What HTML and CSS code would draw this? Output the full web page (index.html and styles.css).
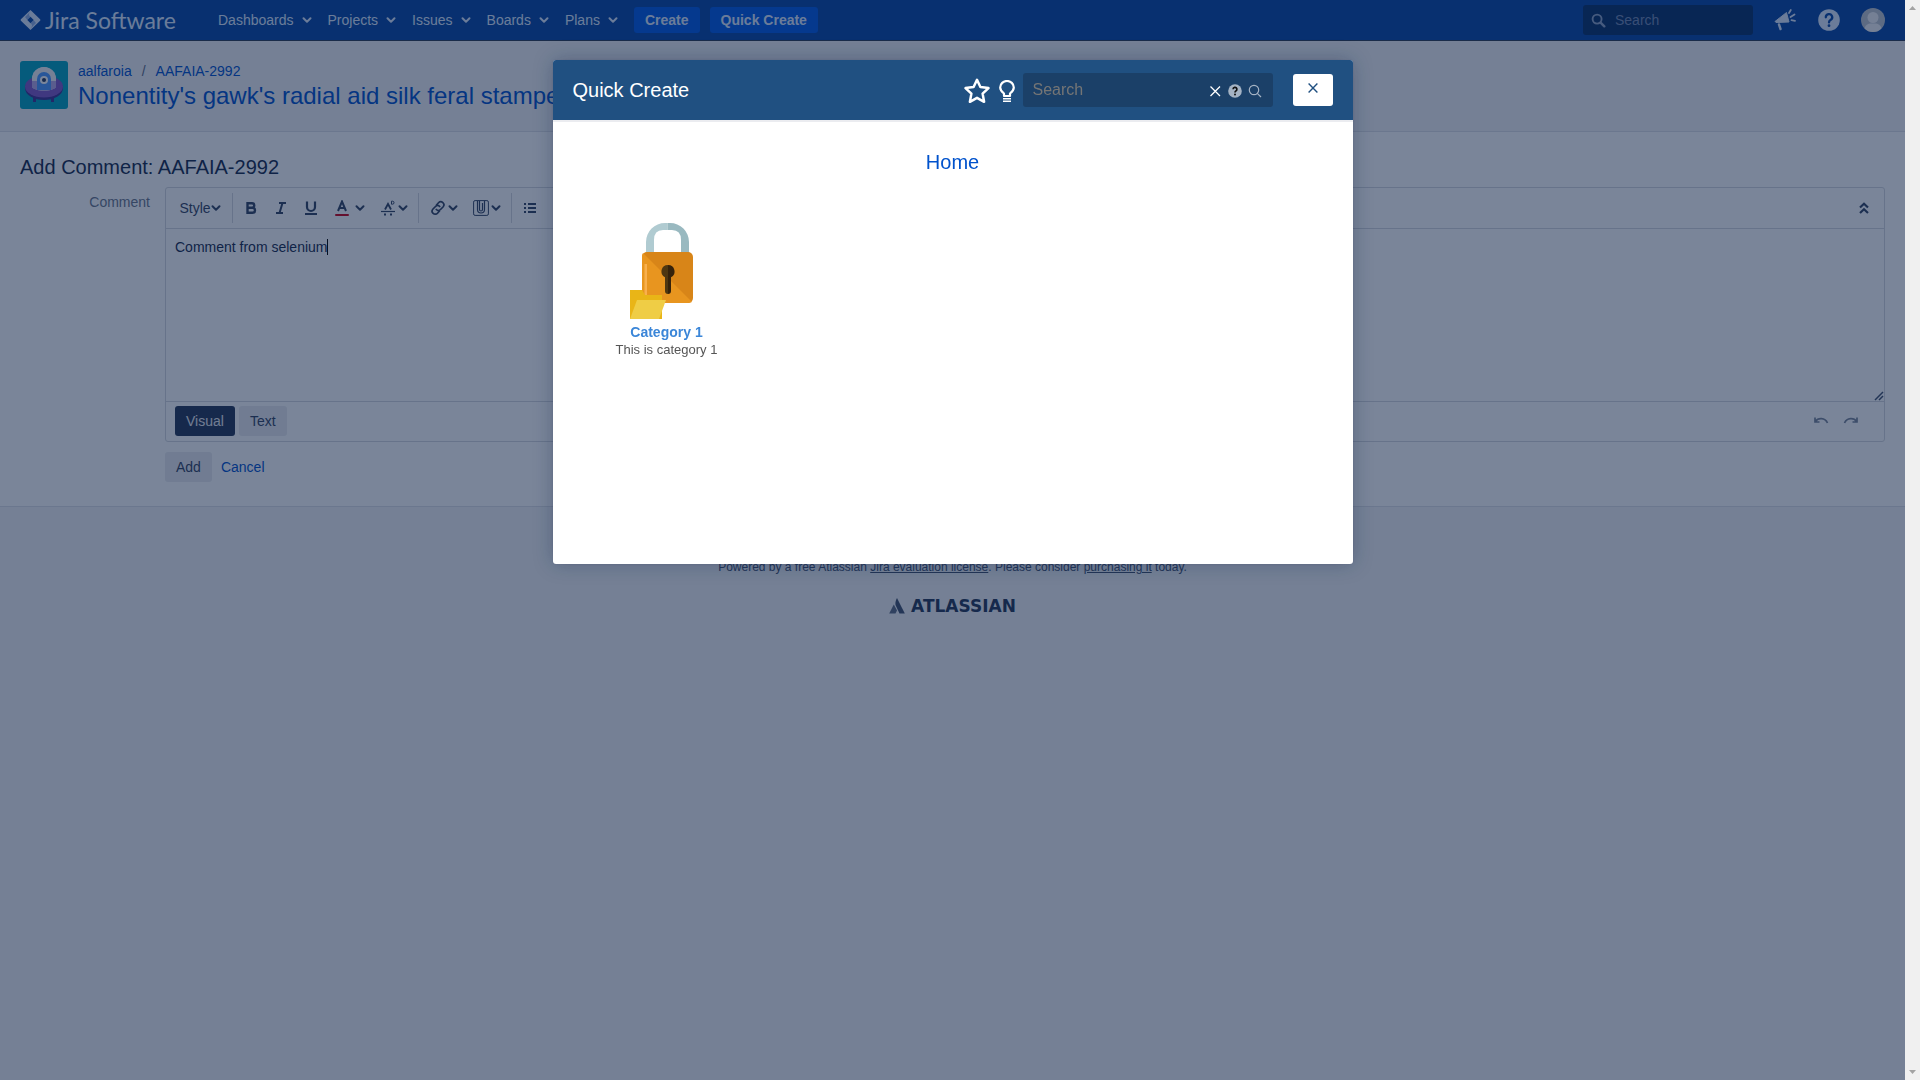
FILE: index.html
```html
<!DOCTYPE html>
<html lang="en">
<head>
<meta charset="utf-8">
<title>Add Comment: AAFAIA-2992 - Jira Software</title>
<link rel="stylesheet" href="styles.css">
</head>
<body>
<svg class="defs" aria-hidden="true">
  <symbol id="chevron" viewBox="0 0 10 10"><path d="M1.5 3.2 5 6.7 8.500 3.200" fill="none" stroke="currentColor" stroke-width="2" stroke-linecap="round" stroke-linejoin="round"/></symbol>
</svg>
<div class="viewport">
<div class="page">
  <header class="topbar">
    <a class="logo" href="#" aria-label="Jira Software">
      <svg class="logo-mark" viewBox="0 0 20 20"><path fill="#deebff" fill-rule="evenodd" d="M10 0 19.600 9.300a1 1 0 0 1 0 1.400L10 20 .4 10.700a1 1 0 0 1 0-1.400ZM10 6.800 6.800 10 10 13.200 13.200 10Z"/><path fill="#5e8ad6" opacity=".6" d="M10 1.500C8 3.500 8 5.500 10 7L6.900 10 4.500 7ZM10 18.500c2-2 2-4 0-5.500l3.100-3 2.400 3Z"/></svg>
      <span class="logo-text">Jira Software</span>
    </a>
    <nav class="nav">
      <a href="#">Dashboards<svg><use href="#chevron"/></svg></a>
      <a href="#">Projects<svg><use href="#chevron"/></svg></a>
      <a href="#">Issues<svg><use href="#chevron"/></svg></a>
      <a href="#">Boards<svg><use href="#chevron"/></svg></a>
      <a href="#">Plans<svg><use href="#chevron"/></svg></a>
    </nav>
    <div class="create">
      <button type="button">Create</button>
      <button type="button">Quick Create</button>
    </div>
    <label class="site-search">
      <svg viewBox="0 0 16 16"><circle cx="6.500" cy="6.500" r="4.800" fill="none" stroke="currentColor" stroke-width="2"/><path d="m10.200 10.200 4 4" stroke="currentColor" stroke-width="2.600" stroke-linecap="round"/></svg>
      <input type="text" placeholder="Search" aria-label="Search site">
    </label>
    <div class="tools">
      <a href="#" aria-label="Feedback"><svg viewBox="0 0 24 24" fill="none" stroke="currentColor"><path d="M2 13.500 13.500 4.500l2.500 9.500-13 .5Z" fill="currentColor" stroke-linejoin="round"/><path d="m6 16.500 1.500 4.500" stroke-width="2.400" stroke-linecap="round"/><path d="m16 5 1.800-3M17.500 9l4-2.500M18.500 12.200l3.500.6" stroke-width="1.800" stroke-linecap="round"/></svg></a>
      <a href="#" aria-label="Help"><svg viewBox="0 0 24 24"><circle cx="12" cy="12" r="10.800" fill="currentColor"/><path d="M8.800 9.300a3.200 3.200 0 1 1 4.700 2.800c-1 .6-1.500 1-1.500 2.300" fill="none" stroke="#0747a6" stroke-width="2.300" stroke-linecap="round"/><circle cx="12" cy="17.700" r="1.400" fill="#0747a6"/></svg></a>
      <a href="#" aria-label="User profile"><svg viewBox="0 0 24 24"><defs><clipPath id="av"><circle cx="12" cy="12" r="12"/></clipPath></defs><g clip-path="url(#av)"><path fill="#c1c7d0" d="M0 0h24v24H0z"/><circle cx="12" cy="9.500" r="5.500" fill="#f4f5f7"/><path d="M3 24c0-6 3-8 6-8.500h6c3 .5 6 2.500 6 8.500Z" fill="#f4f5f7"/></g></svg></a>
    </div>
  </header>

  <section class="issue-head">
    <svg class="project" viewBox="0 0 48 48"><rect width="48" height="48" rx="3" fill="#00a3bf"/><path d="M13 34h3v7h-3zM31 34h3v7h-3z" fill="#403294"/><ellipse cx="24" cy="27" rx="19" ry="12" fill="#403294"/><ellipse cx="24" cy="25.500" rx="19" ry="11" fill="#8058c8"/><path d="M12 18a12 12 0 0 1 24 0v8c-4 5-20 5-24 0Z" fill="#deebff"/><path d="M12 18v8c4 5 20 5 24 0v-8Z" fill="#b9a8e8"/><path d="M12 18a12 12 0 0 1 24 0v2H12Z" fill="#f4f5f7"/><path d="M17 18a7 7 0 0 1 14 0v11H17Z" fill="#4c9aff"/><circle cx="24" cy="19" r="4" fill="#fff"/><circle cx="24" cy="19" r="2" fill="#253858"/></svg>
    <div class="issue-title">
      <nav class="crumbs"><a href="#">aalfaroia</a><span>/</span><a href="#">AAFAIA-2992</a></nav>
      <h1><a href="#">Nonentity's gawk's radial aid silk feral stamped</a></h1>
    </div>
  </section>

  <main class="content">
    <h2>Add Comment: AAFAIA-2992</h2>
    <form class="form">
      <label class="field-label" for="comment">Comment</label>
      <div class="field">
        <div class="editor">
          <div class="toolbar">
            <div class="group"><button type="button" class="style">Style<svg class="chev"><use href="#chevron"/></svg></button></div>
            <div class="group">
              <button type="button" aria-label="Bold"><svg viewBox="0 0 16 16" fill="none" stroke="currentColor" stroke-width="2.400"><path d="M4.500 3.200H9a2.200 2.200 0 0 1 0 4.500H4.500ZM4.500 7.700h5a2.500 2.500 0 0 1 0 5H4.500Z"/></svg></button>
              <button type="button" aria-label="Italic"><svg viewBox="0 0 16 16" fill="none" stroke="currentColor" stroke-width="2"><path d="M6 3h7M3 13h7M9.500 3l-3 10"/></svg></button>
              <button type="button" aria-label="Underline"><svg viewBox="0 0 16 16" fill="none" stroke="currentColor" stroke-width="2.200"><path d="M4 1.500V7a4 4 0 0 0 8 0V1.500M2 14h12"/></svg></button>
              <button type="button" class="pair wide" aria-label="Text colour"><svg viewBox="0 0 16 16"><path d="m4 11 4-9.500L12 11M5.500 8h5" fill="none" stroke="currentColor" stroke-width="2"/><rect x="1" y="14" width="14" height="2" rx="1" fill="#d00016"/></svg><svg class="chev"><use href="#chevron"/></svg></button>
              <button type="button" class="pair" aria-label="More formatting"><svg viewBox="0 0 16 16" fill="none" stroke="currentColor"><path d="M1 11.500h14" stroke-width="1.200"/><path d="m5 9.500 3-5.500 3 5.500M4 14.500h2M10 14.500h2" stroke-width="1.800"/><path d="M11.500 1.200h1a1.300 1.300 0 0 1 0 3h-1Z"/></svg><svg class="chev"><use href="#chevron"/></svg></button>
            </div>
            <div class="group">
              <button type="button" class="pair" aria-label="Link"><svg viewBox="0 0 16 16" fill="none" stroke="currentColor" stroke-width="1.700" stroke-linecap="round"><path d="m6.500 5 2-2.200a3 3 0 0 1 4.500 4.200l-2.500 2.500a3 3 0 0 1-4.200 0M9.500 11l-2 2.200A3 3 0 0 1 3 9l2.500-2.500a3 3 0 0 1 4.200 0"/></svg><svg class="chev"><use href="#chevron"/></svg></button>
              <button type="button" class="pair" aria-label="Attachment"><svg viewBox="0 0 16 16" fill="none" stroke="currentColor"><rect x=".6" y=".6" width="14.800" height="14.800" rx="1.500"/><path d="M4.500 1v8.500a3.500 3.500 0 0 0 7 0V3.500M9.500 3v6.500a1.500 1.500 0 0 1-3 0V1M11.500 3.500V1" stroke-width="1.200"/></svg><svg class="chev"><use href="#chevron"/></svg></button>
            </div>
            <div class="group last"><button type="button" aria-label="Bullet list"><svg viewBox="0 0 16 16" fill="currentColor"><path d="M2 3h2v2H2zM2 7h2v2H2zM2 11h2v2H2zM6 3h8v2H6zM6 7h8v2H6zM6 11h8v2H6z"/></svg></button></div>
            <button type="button" class="collapse" aria-label="Collapse toolbar"><svg viewBox="0 0 16 16" fill="none" stroke="currentColor" stroke-width="2.200"><path d="m4 7.500 4-3.700 4 3.700M4 13l4-3.700 4 3.700"/></svg></button>
          </div>
          <div class="textarea-wrap">
            <textarea id="comment">Comment from selenium</textarea>
            <span class="caret"></span>
            <svg class="grip" viewBox="0 0 10 10"><path d="M1 9 9 1M5 9l4-4" stroke="currentColor" stroke-width="1.500"/></svg>
          </div>
          <div class="editor-foot">
            <button type="button" class="btn active">Visual</button>
            <button type="button" class="btn">Text</button>
            <div class="history">
              <button type="button" aria-label="Undo"><svg viewBox="0 0 16 16" fill="none" stroke="currentColor" stroke-width="1.700"><path d="M2 4.500V9h4.500M2.500 8.500C5 4.500 12 4.500 14.500 10"/></svg></button>
              <button type="button" aria-label="Redo"><svg viewBox="0 0 16 16" fill="none" stroke="currentColor" stroke-width="1.700"><path d="M14 4.500V9H9.500M13.500 8.500C11 4.500 4 4.500 1.500 10"/></svg></button>
            </div>
          </div>
        </div>
        <div class="actions"><button type="submit" class="btn">Add</button><a href="#">Cancel</a></div>
      </div>
    </form>
  </main>

  <footer class="footer">
    <p>Powered by a free Atlassian <a href="#">Jira evaluation license</a>. Please consider <a href="#">purchasing it</a> today.</p>
    <a class="atlassian" href="#"><svg viewBox="0 0 16 16"><path fill="#42526e" d="M8 0 15.800 15.500H10.500L6.500 7C6 4 7 2 8 0Z"/><path fill="#5e6c84" d="M4.800 6.500 8 12.500l-1.500 3H.2Z"/></svg><span>ATLASSIAN</span></a>
  </footer>
</div>
<div class="scrollbar" aria-hidden="true"><svg viewBox="0 0 15 15"><path d="M4 10 7.500 6 11 10Z"/></svg><svg viewBox="0 0 15 15"><path d="M4 5 7.500 9 11 5Z"/></svg></div>
</div>

<div class="blanket">
  <section class="dialog" role="dialog" aria-label="Quick Create">
    <header class="dialog-head">
      <h2>Quick Create</h2>
      <button type="button" class="icon star" aria-label="Favourites"><svg viewBox="0 0 28 28"><path d="m14 2.800 3.400 7.200 8.100 1.100-5.900 5.500 1.500 8.200-7.100-4-7.100 4 1.500-8.200-5.900-5.500L10.600 10Z" fill="none" stroke="currentColor" stroke-width="2.500" stroke-linejoin="round"/></svg></button>
      <button type="button" class="icon bulb" aria-label="Tips"><svg viewBox="0 0 16 22"><path d="M5 16v-2.500C2.500 11.500 1.200 10 1.200 7.500a6.800 6.500 0 0 1 13.600 0c0 2.500-1.300 4-3.800 6V16Z" fill="none" stroke="currentColor" stroke-width="2.200" stroke-linejoin="round"/><path d="M4 18h8v1.500H4zM4 20.500h8V22H4z" fill="currentColor"/></svg></button>
      <div class="dialog-search">
        <input type="text" placeholder="Search" aria-label="Search categories">
        <svg viewBox="0 0 14 14"><path d="m2.500 2.500 9.500 9.500m0-9.500-9.500 9.500" stroke="#fff" stroke-width="1.300"/></svg>
        <svg viewBox="0 0 14 14"><circle cx="7" cy="7" r="6.800" fill="#a5b3c4"/><path d="M5.100 5.300a1.900 1.900 0 1 1 2.800 1.600c-.7.400-.9.700-.9 1.500" fill="none" stroke="#111" stroke-width="1.700"/><circle cx="7" cy="10.600" r="1" fill="#111"/></svg>
        <svg viewBox="0 0 14 14" fill="none" stroke="#a5b3c4" stroke-width="1.200"><circle cx="6" cy="6" r="4.700"/><path d="m9.300 9.300 3.700 3.700"/></svg>
      </div>
      <button type="button" class="close" aria-label="Close"><svg viewBox="0 0 10 10"><path d="m.6.600 8.800 8.800m0-8.800L.6 9.400" stroke="currentColor" stroke-width="1.400"/></svg></button>
    </header>
    <div class="dialog-body">
      <h3><a href="#">Home</a></h3>
      <div class="categories">
        <a class="category" href="#">
          <svg viewBox="0 0 74 98"><path d="M16 32V20A19 19 0 0 1 35 1h2.500v7H33q-9 0-9 10v14Z" fill="#b0cbd1"/><path d="M37.500 1H40a19 19 0 0 1 19 19v12h-8V18q0-10-9-10h-4.500Z" fill="#99b9c0"/><rect x="12" y="30" width="51" height="51" rx="5" fill="#d88518"/><path d="M13 31 62 80q-2 1-4 1H17q-5 0-5-5V35q0-3 1-4Z" fill="#e8951f"/><path d="M14.500 42h2.500v36h-2.500z" fill="#f9b04d"/><path d="M38 43a6.500 6.500 0 0 0-3 12.300V69q0 3 3 3Z" fill="#4f3711"/><path d="M38 43a6.500 6.500 0 0 1 3 12.300V69q0 3-3 3Z" fill="#35220b"/><path d="M0 68h12l3 5h17v24H0Z" fill="#e9b517"/><path d="M7 78h29l-7 19H0Z" fill="#efcd45"/></svg>
          <strong>Category 1</strong>
          <span>This is category 1</span>
        </a>
      </div>
    </div>
  </section>
</div>
</body>
</html>
```
FILE: styles.css
```css
* { box-sizing: border-box; }
html, body { height: 100%; }
body { margin: 0; font: 14px/20px "Liberation Sans", Arial, sans-serif; color: #172b4d; background: #f4f5f7; overflow: hidden; }
a { color: #0052cc; text-decoration: none; }
h1, h2, h3, p { margin: 0; font-weight: 400; }
button, input, textarea { font: inherit; }
button { border: 0; padding: 0; background: none; color: inherit; }
svg { display: block; flex: none; }
.defs { display: none; }

.viewport { display: flex; min-height: 100%; }
.page { flex: 1; min-width: 0; }
.scrollbar { position: relative; z-index: 3; width: 15px; flex: none; background: #f0f0f0; display: flex; flex-direction: column; justify-content: space-between; fill: #a3a3a3; }
.scrollbar svg { width: 15px; height: 15px; }

.topbar { display: flex; align-items: center; height: 41px; padding: 0 20px; background: #0747a6; border-bottom: 1px solid #2e3d54; color: #deebff; }
.logo { display: flex; align-items: center; gap: 4px; width: 188px; color: #deebff; }
.logo-mark { width: 21px; height: 20px; }
.logo-text { font: 23px/24px Lato, sans-serif; white-space: nowrap; }
.nav { display: flex; }
.nav a { display: flex; align-items: center; gap: 8px; padding: 0 6px 0 10px; color: #deebff; }
.nav svg { width: 10px; height: 10px; }
.create { display: flex; gap: 10px; padding-left: 10px; }
.create button { height: 26px; padding: 0 11px; border-radius: 3px; background: #0059e6; font-weight: 700; }
.site-search { display: flex; align-items: center; gap: 9px; width: 170px; height: 30px; margin-left: auto; padding: 0 8px; border-radius: 3px; background: #083069; color: #8fa3c6; }
.site-search svg { width: 15px; height: 15px; }
.site-search input { flex: 1; min-width: 0; border: 0; padding: 0; background: none; }
.site-search input::placeholder { color: #7188b3; opacity: 1; }
.tools { display: flex; gap: 20px; padding-left: 20px; }
.tools svg { width: 24px; height: 24px; }
.tools a { color: #deebff; }

.issue-head { display: flex; gap: 10px; padding: 20px; border-bottom: 1px solid #dfe1e6; }
.project { width: 48px; height: 48px; }
.crumbs { display: flex; gap: 10px; color: #5e6c84; }
.issue-title h1 { font-size: 24px; line-height: 30px; white-space: nowrap; }

.content { padding: 23px 20px 24px; background: #fff; border-bottom: 1px solid #dfe1e6; }
.content h2 { font-size: 20px; line-height: 24px; }
.form { display: flex; padding-top: 8px; gap: 15px; }
.field-label { width: 130px; padding-top: 5px; text-align: right; color: #6b778c; }
.field { flex: 1; }
.editor { border: 1px solid #d5d8de; border-radius: 3px; }
.toolbar { display: flex; align-items: center; height: 41px; border-bottom: 1px solid #d5d8de; color: #344563; }
.group { display: flex; align-items: center; height: 30px; padding: 0 3px; border-right: 1px solid #d5d8de; }
.group.last { border: 0; }
.toolbar button { display: flex; align-items: center; justify-content: center; width: 30px; height: 30px; }
.toolbar svg { width: 16px; height: 16px; }
.toolbar .chev { width: 10px; height: 10px; }
.toolbar .style { width: 60px; padding-left: 2px; }
.toolbar .pair { width: 43px; gap: 2px; }
.toolbar .wide { width: 46px; gap: 5px; }
.toolbar .collapse { margin-left: auto; margin-right: 5px; }
.textarea-wrap { position: relative; height: 173px; border-bottom: 1px solid #d5d8de; }
textarea { display: block; width: 100%; height: 100%; padding: 8px 9px; border: 0; background: none; color: #172b4d; outline: 0; resize: none; }
.caret { position: absolute; left: 161px; top: 10px; width: 1px; height: 16px; background: #000; }
.grip { position: absolute; right: 0; bottom: 0; width: 10px; height: 10px; color: #42526e; }
.editor-foot { display: flex; align-items: center; gap: 4px; padding: 4px 9px 5px; }
.btn { height: 30px; padding: 0 11px; border-radius: 3px; background: #ebecf0; color: #344563; }
.btn.active { background: #253858; color: #ebecf0; }
.history { display: flex; gap: 14px; margin-left: auto; padding-right: 16px; color: #7a869a; }
.history svg { width: 16px; height: 16px; }
.actions { display: flex; align-items: center; gap: 9px; padding-top: 10px; }

.footer { padding: 50px 20px; text-align: center; font-size: 12px; color: #42526e; }
.footer p a { color: inherit; text-decoration: underline; }
.atlassian { display: flex; justify-content: center; align-items: center; gap: 6px; padding-top: 19px; color: #253858; font: 700 17px/20px "DejaVu Sans", sans-serif; }
.atlassian svg { width: 16px; height: 16px; }

.blanket { position: fixed; inset: 0 15px 0 0; z-index: 2; padding-top: 60px; background: rgba(9, 30, 66, .54); }
.dialog { width: 800px; margin: 0 auto; border-radius: 3px; overflow: hidden; background: #fff; box-shadow: 0 0 1px rgba(9, 30, 66, .3), 0 0 20px rgba(9, 30, 66, .3); }
.dialog-head { display: flex; align-items: center; height: 62px; padding: 0 20px; background: #205081; border-bottom: 2px solid #ebecf0; color: #fff; }
.dialog-head h2 { flex: 1; font-size: 20px; line-height: 24px; }
.icon { padding-top: 2px; }
.star svg { width: 28px; height: 28px; }
.bulb svg { width: 16px; height: 22px; }
.bulb { margin: 0 8px; }
.dialog-search { display: flex; align-items: center; gap: 6px; width: 250px; height: 34px; padding: 0 11px 0 10px; border-radius: 3px; background: #1b4068; }
.dialog-search input { flex: 1; min-width: 0; border: 0; padding: 0; background: none; color: #fff; font-size: 16px; }
.dialog-search input::placeholder { color: #757575; opacity: 1; }
.dialog-search svg { width: 14px; height: 14px; margin-top: 2px; }
.close { display: flex; justify-content: center; width: 40px; height: 32px; margin-left: 20px; padding-top: 9px; border-radius: 3px; background: #fff; color: #205081; }
.close svg { width: 10px; height: 10px; }
.dialog-body { min-height: 442px; padding: 28px 20px; }
.dialog-body h3 { text-align: center; font-size: 20px; line-height: 24px; }
.categories { display: flex; padding: 48px 20px 0; }
.category { display: flex; flex-direction: column; align-items: center; width: 148px; line-height: 17px; font-size: 13px; color: #555; }
.category svg { width: 74px; height: 98px; }
.category strong { padding-top: 4px; font-size: 14px; color: #3b86d8; }
```
